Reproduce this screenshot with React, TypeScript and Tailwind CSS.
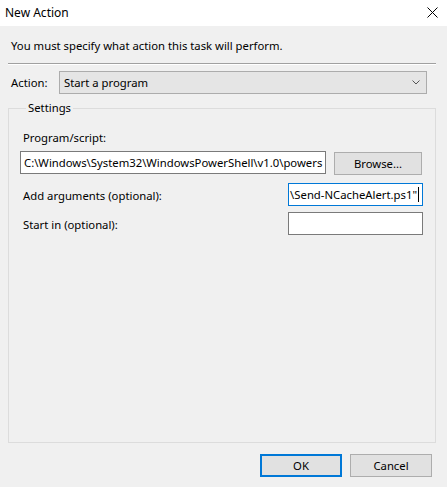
export default function App() {
  return (
    <div className="flex h-[487px] w-[447px] flex-col bg-[#f0f0f0] text-[11.3px] leading-[16px] text-black [font-family:'Noto_Sans',sans-serif]">
      {/* title bar */}
      <div className="flex h-[26px] items-center justify-between bg-white pl-[5px] pr-[9px] text-[12px]">
        <span className="pb-[1px]">New Action</span>
        <svg width="11" height="11" viewBox="0 0 11 11" className="mb-[1px]">
          <path d="M0.5 0.5 L10.5 10.5 M10.5 0.5 L0.5 10.5" stroke="#000" strokeWidth="1" fill="none" />
        </svg>
      </div>

      <div className="flex flex-1 flex-col pl-[8px] pr-[11px]">
        <p className="mt-[12px] pl-[3px]">You must specify what action this task will perform.</p>
        <div className="mt-[9px] h-[2px] border-t border-b border-t-[#a0a0a0] border-b-white" />

        <div className="mt-[6px] flex items-center">
          <span className="w-[51px] pl-[3px]">Action:</span>
          <div className="flex h-[23px] w-[368px] items-center justify-between border border-[#acacac] bg-[#e5e5e5] pl-[4px] pr-[6px]">
            <span>Start a program</span>
            <svg width="8" height="5" viewBox="0 0 8 5">
              <path d="M0.5 0.5 L4 4 L7.5 0.5" stroke="#555" strokeWidth="1" fill="none" />
            </svg>
          </div>
        </div>

        <fieldset className="mt-[6px] flex-1 border border-[#dcdcdc] pl-[11px] pr-[12px]">
          <legend className="ml-[6px] px-[2px]">Settings</legend>

          <div className="mt-[14px] pl-[3px]">Program/script:</div>
          <div className="mt-[5px] flex items-start justify-between">
            <div className="h-[23px] w-[306px] overflow-hidden whitespace-nowrap border border-[#7a7a7a] bg-white pl-[3px] leading-[21px]">
              C:\Windows\System32\WindowsPowerShell\v1.0\powers
            </div>
            <button className="mr-[1px] mt-[1px] h-[23px] w-[88px] border border-[#adadad] bg-[#e1e1e1]">Browse...</button>
          </div>

          <div className="mt-[8px] flex items-center justify-between">
            <span className="pl-[3px] pt-[3px]">Add arguments (optional):</span>
            <div className="flex h-[23px] w-[135px] items-center justify-end overflow-hidden whitespace-nowrap border border-[#0078d7] bg-white pr-[3px] leading-[21px]">
              <span>\Send-NCacheAlert.ps1"</span>
              <span className="ml-[1px] h-[15px] w-[1px] shrink-0 bg-black" />
            </div>
          </div>

          <div className="mt-[6px] flex items-center justify-between">
            <span className="pl-[3px] pt-[3px]">Start in (optional):</span>
            <div className="h-[23px] w-[135px] border border-[#7a7a7a] bg-white" />
          </div>
        </fieldset>

        <div className="mb-[10px] mt-[11px] flex justify-end gap-[8px] pr-[4px]">
          <button className="h-[23px] w-[82px] border-2 border-[#0078d7] bg-[#e1e1e1]">OK</button>
          <button className="h-[23px] w-[82px] border border-[#adadad] bg-[#e1e1e1]">Cancel</button>
        </div>
      </div>
    </div>
  );
}
